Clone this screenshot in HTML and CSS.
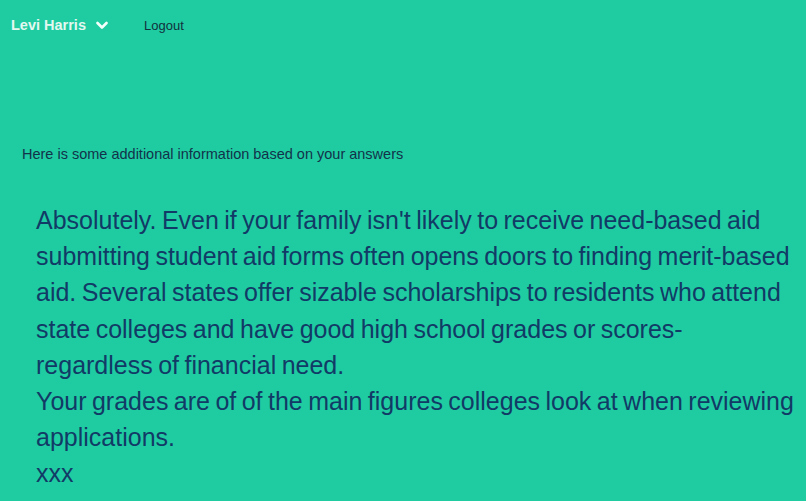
FILE: index.html
```html
<!DOCTYPE html>
<html>
<head>
<meta charset="utf-8">
<link rel="stylesheet" href="styles.css">
</head>
<body>
<header class="topbar">
  <div class="user">
    <span class="user-name">Levi Harris</span>
    <svg class="chevron" width="12" height="9" viewBox="0 0 12 9"><path d="M1.5 2 L6 6.5 L10.5 2" fill="none" stroke="#f4fffb" stroke-width="2.6" stroke-linecap="round" stroke-linejoin="round"/></svg>
  </div>
  <a class="logout">Logout</a>
</header>
<main class="content">
  <p class="intro">Here is some additional information based on your answers</p>
  <div class="answer">
    <p>Absolutely. Even if your family isn't likely to receive need-based aid submitting student aid forms often opens doors to finding merit-based aid. Several states offer sizable scholarships to residents who attend state colleges and have good high school grades or scores-regardless of financial need.</p>
    <p>Your grades are of of the main figures colleges look at when reviewing applications.</p>
    <p>xxx</p>
  </div>
</main>
</body>
</html>
```
FILE: styles.css
```css
html, body {
  margin: 0;
  padding: 0;
  background: #1fcca2;
  height: 100%;
}
body {
  font-family: "Liberation Sans", Arial, sans-serif;
  overflow: hidden;
}
.topbar {
  display: flex;
  align-items: center;
  height: 50px;
  padding: 0 0 0 11px;
}
.user {
  display: flex;
  align-items: center;
  gap: 10px;
  width: 133px;
}
.user-name {
  color: #e3f8f0;
  font-weight: bold;
  font-size: 14.5px;
}
.chevron {
  margin-top: 1px;
}
.logout {
  color: #12303d;
  font-size: 13px;
}
.content {
  padding: 0 10px 0 22px;
}
.intro {
  margin: 96px 0 0 0;
  color: #12324a;
  font-size: 14.5px;
}
.answer {
  margin-top: 40px;
  padding-left: 14px;
  color: #123a66;
  font-size: 25px;
  line-height: 36.2px;
  word-spacing: -1.5px;
}
.answer p {
  margin: 0;
}
```
